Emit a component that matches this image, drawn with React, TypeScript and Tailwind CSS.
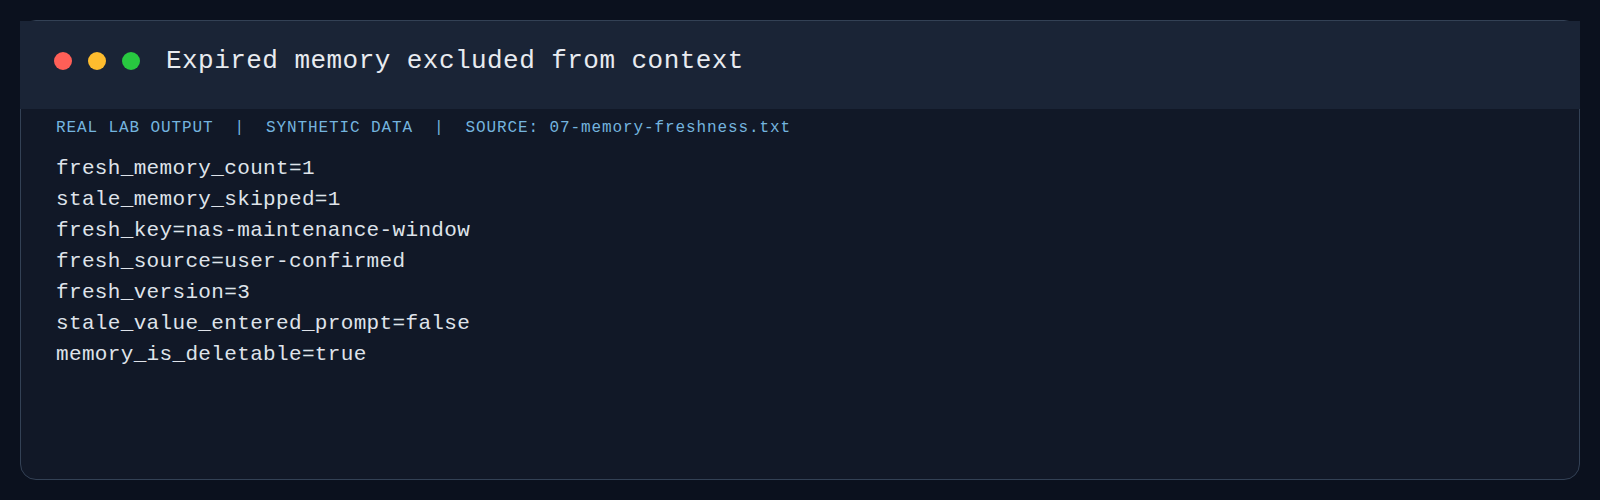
const lines = [
  "fresh_memory_count=1",
  "stale_memory_skipped=1",
  "fresh_key=nas-maintenance-window",
  "fresh_source=user-confirmed",
  "fresh_version=3",
  "stale_value_entered_prompt=false",
  "memory_is_deletable=true",
];

const mono = "font-['Liberation_Mono','DejaVu_Sans_Mono',monospace]";

export default function App() {
  return (
    <div className={`min-h-[500px] w-full bg-[#0b111e] p-5 ${mono}`}>
      {/* Terminal card */}
      <div className="h-[460px] rounded-2xl border border-[#334155] bg-[#111827]">
        {/* Title bar */}
        <div className="-mx-px flex h-[88px] items-center gap-[26px] bg-[#1a2436] pb-2 pl-[34px]">
          <div className="flex items-center gap-4">
            <span className="h-[18px] w-[18px] rounded-full bg-[#ff5f57]" />
            <span className="h-[18px] w-[18px] rounded-full bg-[#febc2e]" />
            <span className="h-[18px] w-[18px] rounded-full bg-[#28c840]" />
          </div>
          <h1 className="text-[26px] leading-none tracking-[0.45px] text-[#e8ebf0]">
            Expired memory excluded from context
          </h1>
        </div>

        {/* Output */}
        <div className="px-[35px] pt-[7px]">
          <div className="whitespace-pre text-[16px] leading-6 tracking-[0.9px] text-[#74b4df]">
            REAL LAB OUTPUT  |  SYNTHETIC DATA  |  SOURCE: 07-memory-freshness.txt
          </div>
          <div className="mt-[13px] text-[21px] leading-[31px] tracking-[0.34px] text-[#dfe3ea]">
            {lines.map((l) => (
              <div key={l}>{l}</div>
            ))}
          </div>
        </div>
      </div>
    </div>
  );
}
